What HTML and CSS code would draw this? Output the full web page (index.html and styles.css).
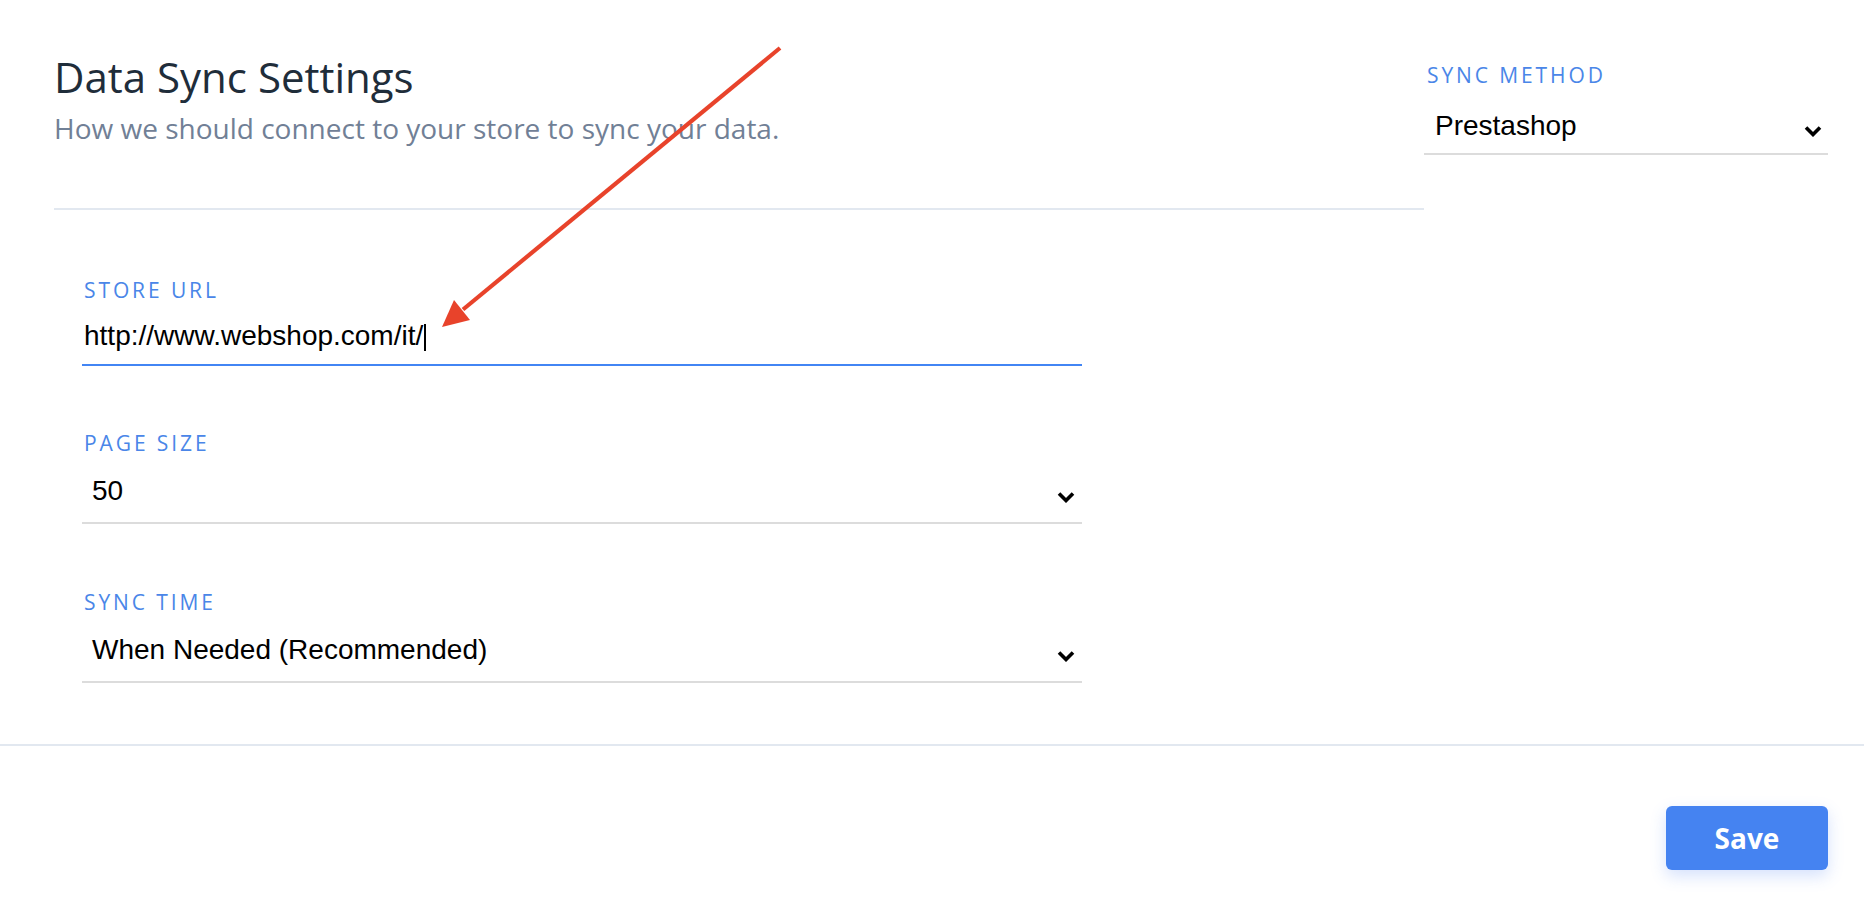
FILE: index.html
```html
<!DOCTYPE html>
<html lang="en">
<head>
<meta charset="utf-8">
<title>Data Sync Settings</title>
<link rel="stylesheet" href="styles.css">
</head>
<body>
<main class="settings">
  <div class="settings-body">
    <section class="main-col">
      <header class="head">
        <h1 class="title">Data Sync Settings</h1>
        <p class="subtitle">How we should connect to your store to sync your data.</p>
      </header>
      <div class="divider"></div>
      <div class="fields">
        <div class="field">
          <div class="label">STORE URL</div>
          <div class="control control-input">http://www.webshop.com/it/<span class="caret"></span></div>
        </div>
        <div class="field">
          <div class="label">PAGE SIZE</div>
          <div class="control control-select">
            <span class="value">50</span>
            <svg class="chev" width="18" height="12" viewBox="0 0 18 12"><polyline points="2,2.5 9,9.5 16,2.5" fill="none" stroke="#000" stroke-width="3.6"/></svg>
          </div>
        </div>
        <div class="field field-last">
          <div class="label">SYNC TIME</div>
          <div class="control control-select">
            <span class="value">When Needed (Recommended)</span>
            <svg class="chev" width="18" height="12" viewBox="0 0 18 12"><polyline points="2,2.5 9,9.5 16,2.5" fill="none" stroke="#000" stroke-width="3.6"/></svg>
          </div>
        </div>
      </div>
    </section>
    <aside class="side-col">
      <div class="label">SYNC METHOD</div>
      <div class="control control-select side-select">
        <span class="value">Prestashop</span>
        <svg class="chev" width="18" height="12" viewBox="0 0 18 12"><polyline points="2,2.5 9,9.5 16,2.5" fill="none" stroke="#000" stroke-width="3.6"/></svg>
      </div>
    </aside>
  </div>
  <footer class="footer">
    <button class="save" type="button">Save</button>
  </footer>
  <svg class="annotation" width="1864" height="916" viewBox="0 0 1864 916">
    <line x1="780" y1="48" x2="463" y2="309.5" stroke="#e8432b" stroke-width="4.2"/>
    <polygon points="442,327 470,320 454,300" fill="#e8432b"/>
  </svg>
</main>
</body>
</html>
```
FILE: styles.css
```css
html, body {
  margin: 0;
  padding: 0;
  background: #ffffff;
}

body {
  font-family: "Open Sans", "Liberation Sans", sans-serif;
  width: 1864px;
  height: 916px;
  overflow: hidden;
}

.settings {
  position: relative;
  width: 1864px;
  height: 916px;
}

.settings-body {
  display: flex;
  padding: 52px 36px 0 54px;
}

.main-col {
  flex: 1;
  min-width: 0;
}

.title {
  margin: 0;
  font-size: 42px;
  line-height: 50px;
  font-weight: 400;
  color: #1f2d3a;
}

.subtitle {
  margin: 8px 0 0;
  font-size: 28px;
  line-height: 36px;
  color: #718096;
}

.divider {
  margin-top: 62px;
  height: 2px;
  background: #e2e8f0;
}

.fields {
  width: 1000px;
  padding: 66px 0 61px 28px;
  display: flex;
  flex-direction: column;
  gap: 63px;
}

.field-last {
  margin-top: 1px;
}

.label {
  font-size: 21px;
  line-height: 28px;
  letter-spacing: 2.9px;
  padding-left: 2px;
  color: #4a86e8;
}

.control {
  font-family: "Liberation Sans", Arial, sans-serif;
  font-size: 28px;
  line-height: 36px;
  color: #000;
  border-bottom: 2px solid #dcdcdc;
}

.control-input {
  margin-top: 14px;
  padding: 0 0 10px 2px;
  border-bottom-color: #4285f4;
}

.caret {
  display: inline-block;
  width: 2px;
  height: 27px;
  margin-left: 1px;
  background: #000;
  vertical-align: -6px;
}

.control-select {
  margin-top: 16px;
  padding: 0 7px 13px 10px;
  display: flex;
  align-items: center;
}

.control-select .value {
  flex: 1;
}

.chev {
  display: block;
  margin-top: 11px;
}

.side-col {
  width: 404px;
  padding-top: 9px;
}

.side-col .label {
  padding-left: 3px;
}

.side-select {
  margin-top: 19px;
  padding: 0 6px 9px 11px;
}

.side-select .chev {
  margin-top: 10px;
}

.footer {
  border-top: 2px solid #e2e8f0;
  display: flex;
  justify-content: flex-end;
  padding: 60px 36px 0 0;
}

.save {
  width: 162px;
  height: 64px;
  border: none;
  border-radius: 6px;
  background: #4583f1;
  color: #ffffff;
  font-family: "Open Sans", sans-serif;
  font-size: 28px;
  font-weight: 700;
  box-shadow: 0 6px 16px rgba(66, 120, 240, 0.22);
  cursor: pointer;
}

.annotation {
  position: absolute;
  left: 0;
  top: 0;
  pointer-events: none;
}
```
